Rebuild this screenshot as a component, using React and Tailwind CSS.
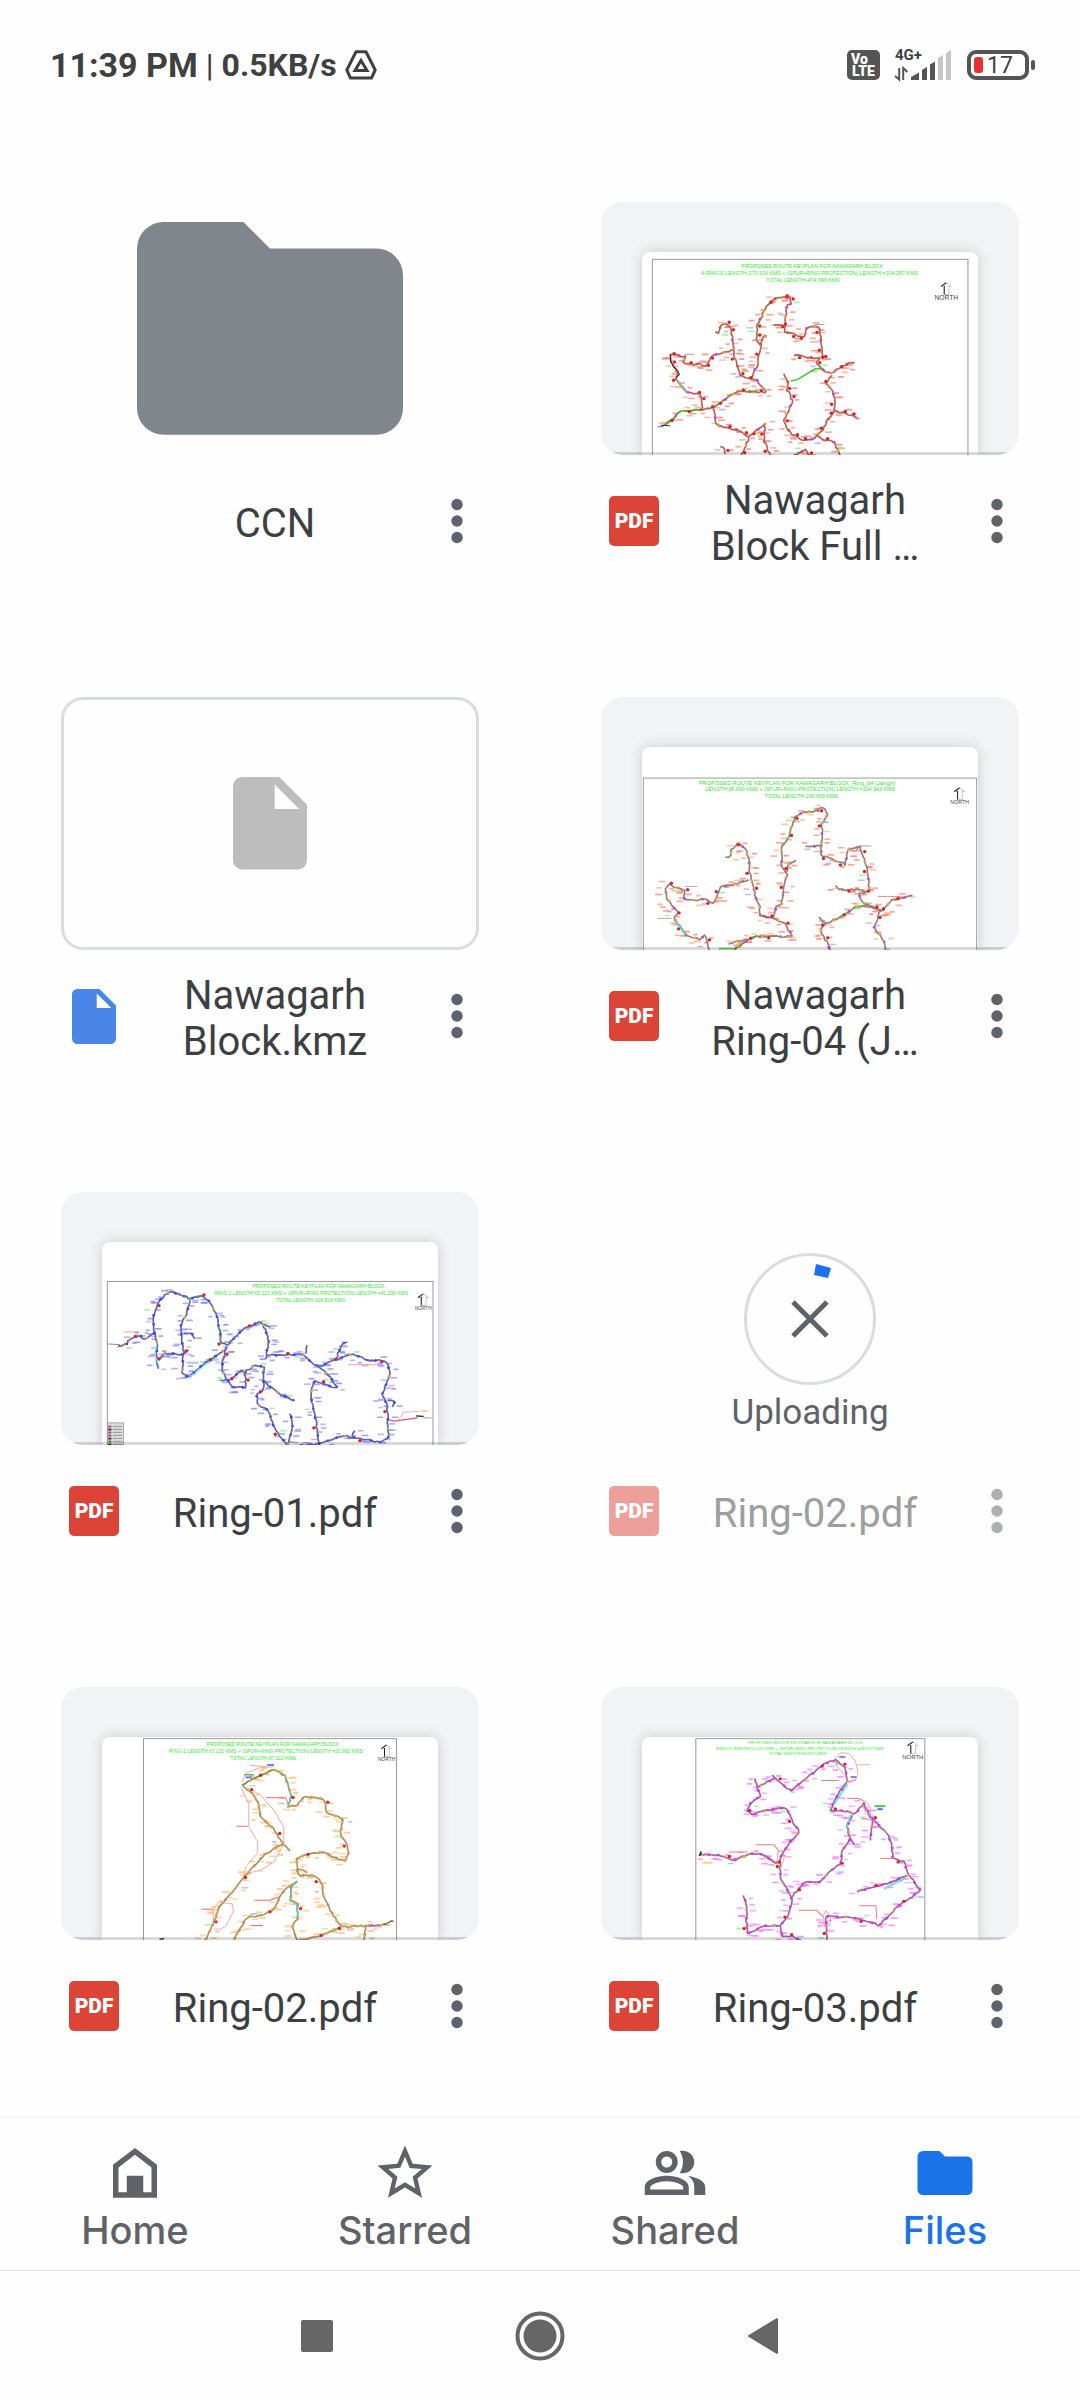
import React from "react";

const FOLDER = "M2 0H8L10 2H18A2 2 0 0 1 20 4V14A2 2 0 0 1 18 16H2A2 2 0 0 1 0 14V2A2 2 0 0 1 2 0Z";
const FILE = "M2 0H10L16 6V18A2 2 0 0 1 14 20H2A2 2 0 0 1 0 18V2A2 2 0 0 1 2 0ZM9 1.6V6.9H14.3Z";

const MAPS = {
  full: {
    box: "156 186 1005 609",
    frame: [187, 208, 944],
    titles: [
      [665, 235, 16, "PROPOSED ROUTE KEYPLAN FOR NAWAGARH BLOCK"],
      [657, 256, 16, "4-RING'S LENGTH-270.103 KMS + (SPUR+RING PROTECTION) LENGTH =204.287 KMS"],
      [637, 277, 16, "TOTAL LENGTH-474.390 KMS"],
    ],
    north: [1066, 277, 20],
    line: "#b8605a",
    marks: ["#e8482a", "#e02020", "#e02020", "#d63ad6", "#e8a33a", "#e02020"],
    labels: ["#ff6a5a", "#ff8a6a", "#ff5a5a", "#ff9a80", "#ff7a6a"],
    routes: [
      "375,425 385,428 390,410 405,397 418,408 425,440 428,470 430,490 440,520 450,555 470,565 500,570 527,605",
      "338,655 330,612 320,610 290,605 275,590 258,565 265,550 250,530 240,505 245,490 285,500 280,520 310,522 330,520 348,530 365,495 400,488 430,478",
      "215,708 245,690 270,662 338,657 370,652 400,630 440,603 527,605",
      "485,562 490,540 502,530 505,500 512,465 500,450 500,400 515,380 525,350 550,325 585,322 600,322 600,340 588,350 586,385 584,425 605,430 640,443 650,410 685,408 690,440 698,505",
      "512,460 516,444 530,437",
      "610,495 620,492 640,500 690,505 675,515 690,535 720,550 750,530 790,514",
      "580,550 595,580 588,595 608,632 590,665 580,690 600,730 640,750 670,745 695,720 710,690 730,665 732,620 725,600 705,580 725,555",
      "730,660 760,668 800,680",
      "680,735 700,748 730,755 750,795",
      "370,655 378,700 410,712 440,717 475,740 525,700 520,750 540,795",
      "475,740 465,770 453,795",
      "390,768 405,772 405,790",
      "610,792 645,778 658,795",
      "550,404 582,406",
    ],
    accents: [
      ["#22cc22", 4, "225,704 245,690 270,662 338,657"],
      ["#66aa33", 3, "372,648 400,630 440,603 500,602"],
      ["#22cc22", 4, "600,572 620,568 650,550 675,535 700,537"],
      ["#66bb44", 2, "500,450 500,400 515,380 525,350 550,325 585,322"],
      ["#55dddd", 3, "262,570 275,590 290,605"],
      ["#222222", 3, "240,492 242,515 252,530 262,540 268,552 258,562"],
      ["#333333", 3, "212,704 240,706"],
      ["#6666ff", 3, "202,709 218,709"],
      ["#777777", 2, "285,492 312,492"],
      ["#777777", 2, "672,403 702,403"],
    ],
  },
  ring4: {
    box: "156 201 1005 609",
    frame: [160, 294, 997],
    titles: [
      [620, 314, 17, "PROPOSED ROUTE KEYPLAN FOR NAWAGARH BLOCK_Ring_04 (Janjgir)"],
      [629, 333, 16, "LENGTH 95.690 KMS + (SPUR+RING PROTECTION) LENGTH =104.943 KMS"],
      [632, 354, 16, "TOTAL LENGTH 200.633 KMS"],
    ],
    north: [1106, 322, 16],
    line: "#947f7c",
    marks: ["#e8a33a", "#e02020", "#d63ad6", "#e8a33a", "#947f7c", "#e02020"],
    labels: ["#ff7a5a", "#ff8a6a", "#ff5a5a", "#ffaa80", "#ff7a6a"],
    routes: [
      "405,530 420,530 425,505 445,490 465,505 475,540 478,575 485,600 495,650 508,680 510,705 545,712 580,725 608,768 490,768 430,808",
      "357,808 345,765 330,775 290,768 270,735 248,712 265,695 250,680 228,650 228,625 235,612 285,630 280,655 320,660 345,655 370,670 390,620 430,612 475,598",
      "548,712 560,675 575,670 580,620 590,580 575,565 573,500 595,470 600,445 615,410 640,395 680,393 695,380 712,400 695,430 692,525 745,545 765,553 772,510 808,500 825,550 832,580 836,632",
      "590,575 590,555 617,540",
      "735,615 745,628 800,628 830,635 805,640 815,665 870,690 905,660 965,645",
      "685,710 705,730 745,712 795,680 825,675 870,690",
      "705,730 690,750 720,808",
      "870,690 850,740 880,780 882,808",
      "645,498 690,498",
      "415,790 440,782 470,778",
    ],
    accents: [
      ["#55bb55", 4, "745,712 795,680 825,675"],
      ["#66bb44", 2, "575,500 595,470 600,445 615,410 640,395 680,393"],
      ["#669955", 4, "430,806 490,768 560,766"],
      ["#66dddd", 4, "252,718 270,740 290,768"],
      ["#66dddd", 5, "690,430 700,424"],
      ["#cc3344", 3, "505,703 530,712 548,712"],
      ["#888888", 2, "285,618 323,618"],
      ["#888888", 2, "203,714 245,714"],
      ["#777777", 2, "808,497 842,497"],
      ["#dd5555", 2, "862,648 932,648"],
      ["#55dd55", 5, "386,804 428,804"],
    ],
  },
  ring1: {
    box: "186 186 1005 609",
    frame: [202, 304, 974],
    titles: [
      [834, 325, 15, "PROPOSED ROUTE KEYPLAN FOR NAWAGARH BLOCK"],
      [812, 345, 15, "RING-1 LENGTH 65.223 KMS + (SPUR+RING PROTECTION) LENGTH =41.295 KMS"],
      [810, 366, 15, "TOTAL LENGTH 106.518 KMS"],
    ],
    north: [1147, 340, 14],
    legend: [203, 727, 47],
    line: "#6262b4",
    marks: ["#4444dd", "#e02020", "#4444dd", "#e8a33a", "#4444dd", "#5a5ad8"],
    labels: ["#7a7aff", "#8a8aff", "#6a6aff", "#9a9aff", "#7a7aff"],
    routes: [
      "235,498 260,492 270,475 300,465 310,480 345,455",
      "355,565 348,540 352,490 342,455 340,400 355,365 388,333 430,348 450,355 485,348 510,365 530,410 540,460 540,485 560,495",
      "450,360 440,400 422,435 425,480 430,520 425,580 445,590 490,550 530,525 555,505",
      "355,540 370,520 400,520 425,522 445,510",
      "430,460 455,460 465,475",
      "560,495 585,470 610,445 655,425 670,435 685,480 675,535",
      "680,525 790,522 810,545 835,560 880,540 935,520 980,540 1035,540 1048,580 1025,640 1040,680 1042,770 1018,785 960,775 905,765 870,778 835,790 765,795",
      "560,500 545,545 550,580 575,620 615,622 615,575 640,556 670,558 668,630 648,645 655,675 685,690 700,740 740,795 757,740 750,700",
      "670,600 690,620 715,640 760,660",
      "835,560 870,590 890,622 850,612 822,600 810,640 825,720 835,790",
      "885,535 905,490 920,485",
      "795,520 800,495",
      "665,430 690,440",
      "540,600 565,600 600,572 615,572",
      "1040,660 1062,662 1055,680",
      "935,768 940,750",
    ],
    accents: [
      ["#77eeee", 3, "352,480 344,525 358,560"],
      ["#77dddd", 3, "445,592 490,555 530,530"],
      ["#44aa77", 2, "388,335 430,348 450,355 485,348 510,365 530,410 538,460 540,485"],
      ["#55bb77", 2, "545,530 543,575 570,600"],
      ["#cc7766", 3, "235,498 262,490 270,475 305,464"],
      ["#555555", 2, "203,491 240,493 232,502"],
      ["#ff7777", 2, "250,455 292,455 292,464"],
      ["#ff6666", 2, "922,553 1008,553"],
      ["#dd5577", 4, "1045,718 1060,722 1130,712"],
      ["#ff8877", 2, "1072,720 1088,695 1135,693"],
      ["#ffbb66", 4, "1140,692 1160,692"],
      ["#333333", 4, "1125,706 1148,708"],
      ["#777777", 2, "1148,712 1172,712"],
      ["#4488dd", 4, "832,562 850,556"],
    ],
  },
  ring2: {
    box: "186 201 1005 609",
    frame: [310, 206, 757],
    titles: [
      [697, 228, 15, "PROPOSED ROUTE KEYPLAN FOR NAWAGARH BLOCK"],
      [676, 249, 15, "RING-2 LENGTH 67.120 KMS + (SPUR+RING PROTECTION) LENGTH =20.992 KMS"],
      [668, 269, 15, "TOTAL LENGTH 87.112 KMS"],
    ],
    north: [1037, 224, 15],
    line: "#ad9163",
    marks: ["#e8a33a", "#e02020", "#e8a33a", "#e8a33a", "#ad9163", "#d8902a"],
    labels: ["#ffbb66", "#ffaa55", "#ffc880", "#ffb060", "#ffb890"],
    routes: [
      "605,345 640,325 700,298 735,320 752,375 742,410 770,405 790,380 850,385 860,430 905,445 900,495 918,520 925,545 915,572 880,560 850,545 810,548 768,565 770,600 775,615 820,615 845,640 850,680 870,720 900,770 980,765 1040,762",
      "605,345 640,375 655,400 660,440 690,465 728,520 748,542",
      "728,520 670,555 615,615 580,660 535,710 515,770 495,808",
      "770,632 735,655 718,680 700,715 670,735 625,738 600,770 580,808",
      "770,632 752,650 750,690 772,700 772,745 755,770 770,808 830,800 900,770",
      "975,765 970,808",
      "770,595 800,605",
    ],
    accents: [
      ["#44cccc", 3, "735,322 752,375 742,410"],
      ["#44cccc", 4, "768,632 752,650 750,690 768,700 772,740"],
      ["#77994a", 4, "605,345 640,325 700,298"],
      ["#f07b84", 2, "602,352 625,400 625,470 652,515 650,550 615,590 612,610 660,600 700,575 730,520 730,470 700,420 660,375 620,352"],
      ["#f07b84", 2, "520,770 518,715 535,695 575,700 580,722 555,768 540,776 520,775"],
      ["#f07b84", 2, "605,335 615,310 658,293 700,290"],
      ["#ff7777", 2, "630,286 680,290"],
      ["#ff6666", 3, "676,383 735,383 742,398"],
      ["#ff6666", 3, "588,468 622,468"],
      ["#ff6666", 3, "642,689 690,689 718,678"],
      ["#ff6666", 3, "483,716 515,716"],
      ["#ff6666", 3, "630,765 668,765"],
      ["#44cc44", 5, "612,314 640,314"],
      ["#6666ff", 5, "615,322 634,322"],
      ["#7777ff", 6, "680,285 700,285"],
      ["#dd44dd", 4, "985,767 1015,764"],
      ["#555555", 4, "1028,764 1040,758 1050,752 1058,752"],
      ["#555555", 5, "358,806 372,804"],
    ],
  },
  ring3: {
    box: "156 201 1005 609",
    frame: [317, 206, 685],
    titles: [
      [645, 221, 13, "PROPOSED ROUTE KEYPLAN FOR NAWAGARH BLOCK"],
      [628, 239, 13, "RING-3 LENGTH 52.070 KMS + (SPUR+RING PROTECTION) LENGTH =28.057 KMS"],
      [621, 256, 13, "TOTAL LENGTH 80.827 KMS"],
    ],
    north: [966, 215, 18],
    line: "#a55fae",
    marks: ["#d63ad6", "#e02020", "#d63ad6", "#e8a33a", "#c040c0", "#d63ad6"],
    labels: ["#ff6aff", "#ff5aff", "#ff7aff", "#f48aff", "#ff6af0"],
    routes: [
      "735,268 695,285 640,330 600,362 555,325 500,350 510,378 480,400 470,425 490,432 540,418 588,413 610,460 628,485 595,520 570,560 568,600 575,635 595,665 605,690 590,740 570,765 525,765 470,790 468,700 460,675",
      "735,268 765,295 770,335 745,370 725,405 718,420 760,422 795,430 820,400 840,440 890,490 905,530 905,560 940,575 950,610 990,660 930,700 865,765 810,745 770,740 705,738 710,770 708,808",
      "785,435 770,470 780,505 755,540 750,580 715,605 690,635 640,635 605,680",
      "845,440 840,510",
      "950,615 890,640 845,650 800,665",
      "330,552 390,555 430,570 480,550 510,550 560,580",
      "570,765 575,798 600,796 630,808",
      "555,325 545,315",
      "500,350 495,325",
      "780,505 790,525",
    ],
    accents: [
      ["#66dddd", 4, "770,342 730,402"],
      ["#66dddd", 4, "780,435 768,475"],
      ["#66dddd", 4, "945,622 880,655"],
      ["#aa8877", 3, "335,552 390,555 430,570 480,550 510,550 555,580"],
      ["#f07b74", 2, "735,265 750,248 775,250 795,275 802,310 795,328 775,334 762,315 740,290 735,265"],
      ["#f07b74", 2, "800,284 838,284"],
      ["#f07b74", 3, "692,331 744,331"],
      ["#f07b74", 2, "815,400 822,392 838,410 840,435 825,432 815,400"],
      ["#f07b74", 3, "770,385 803,385 820,392"],
      ["#f07b74", 3, "496,523 550,523 568,545"],
      ["#f07b74", 2, "562,545 575,540 582,560 572,590 560,575 562,545"],
      ["#f07b74", 3, "415,545 472,545"],
      ["#f07b74", 3, "625,719 678,719 697,738"],
      ["#f07b74", 2, "698,735 706,720 720,740 718,765 702,768 698,735"],
      ["#f07b74", 3, "806,706 856,706 858,745"],
      ["#f07b74", 3, "868,564 905,564"],
      ["#44cc44", 6, "852,408 884,408"],
      ["#5566ff", 6, "860,417 876,417"],
      ["#7788ff", 6, "746,261 764,261"],
      ["#7788ff", 6, "780,321 798,321"],
      ["#222222", 5, "328,557 333,544"],
      ["#ffcc66", 5, "336,577 366,577"],
    ],
  },
};

// Walks a route at a fixed step and returns the survey points on it.
function survey(route, step) {
  const pts = route.split(" ").map((p) => p.split(",").map(Number));
  const out = [];
  let carry = 0;
  for (let i = 1; i < pts.length; i++) {
    const [x0, y0] = pts[i - 1];
    const [x1, y1] = pts[i];
    const len = Math.hypot(x1 - x0, y1 - y0);
    let d = step - carry;
    while (d <= len) {
      out.push([x0 + ((x1 - x0) * d) / len, y0 + ((y1 - y0) * d) / len]);
      d += step;
    }
    carry = len - (d - step);
  }
  return out;
}

function noise(n) {
  const v = Math.sin(n * 127.1 + 11.7) * 43758.5453;
  return v - Math.floor(v);
}

function wobble(route, seed) {
  const first = route.split(" ")[0];
  const last = route.split(" ").slice(-1)[0];
  const mid = survey(route, 9).map(
    ([x, y], i) => (x + (noise(i + seed) - 0.5) * 5).toFixed(1) + "," + (y + (noise(i * 3 + seed) - 0.5) * 5).toFixed(1)
  );
  return [first, ...mid, last].join(" ");
}

function RouteMap({ map }) {
  const [fx, fy, fw] = map.frame;
  const [nx, ny, ns] = map.north;
  return (
    <svg viewBox={map.box} className="block w-full" role="img" aria-label={map.titles[0][3]}>
      <rect x={fx} y={fy} width={fw} height="700" fill="none" stroke="#9a9a9a" strokeWidth="3" />
      {map.titles.map(([x, y, size, text]) => (
        <text key={y} x={x} y={y} fontSize={size} fill="#2aee2a" textAnchor="middle" fontFamily="'Liberation Sans', Arial, sans-serif">
          {text}
        </text>
      ))}
      <path
        d={`M${nx - 6} ${ny + 36}V${ny + 12}H${nx - 15}L${nx} ${ny + 1}L${nx + 15} ${ny + 12}H${nx + 8}V${ny + 36}Z`}
        fill="none"
        stroke="#aaa"
        strokeWidth="2"
      />
      <path d={`M${nx - 6} ${ny + 36}V${ny + 10}M${nx - 16} ${ny + 12}L${nx} ${ny + 1}`} stroke="#222" strokeWidth="3" />
      <text x={nx} y={ny + 54 - (20 - ns)} fontSize={ns} fill="#444" textAnchor="middle" fontFamily="'Liberation Sans', Arial, sans-serif">
        NORTH
      </text>
      {map.legend && (
        <g>
          <rect x={map.legend[0]} y={map.legend[1]} width={map.legend[2]} height="90" fill="#dcdcdc" stroke="#888" strokeWidth="2" />
          {[0, 1, 2, 3, 4, 5, 6].map((i) => (
            <g key={i}>
              <rect x={map.legend[0] + 2} y={map.legend[1] + 8 + i * 9} width="9" height="6" fill={["#b55", "#333", "#b3b", "#c35", "#343", "#484", "#222"][i]} />
              <rect x={map.legend[0] + 15} y={map.legend[1] + 9 + i * 9} width="28" height="3" fill="#999" />
            </g>
          ))}
        </g>
      )}
      {map.routes.map((r, k) =>
        survey(r, 13).map(([x, y], i) => {
          const n = i + k * 53;
          const side = noise(n) > 0.5 ? 1 : -1;
          const w = 13 + noise(n * 5) * 9;
          const cx = x + side * (8 + noise(n * 7) * 16);
          const cy = y + (noise(n * 9) - 0.5) * 28;
          const fill = n % 13 === 0 ? "#7ae87a" : n % 17 === 0 ? "#9a9aff" : map.labels[n % 5];
          return <rect key={k + "-" + i} x={cx - w / 2} y={cy} width={w} height="5" rx="2" fill={fill} opacity="0.65" />;
        })
      )}
      {map.accents.filter((a) => a[1] >= 3 && a[0].endsWith("dddd")).map(([c, w, p]) => (
        <polyline key={p} points={p} fill="none" stroke={c} strokeWidth={w + 5} opacity="0.5" />
      ))}
      {map.routes.map((r, k) => (
        <polyline key={k} points={wobble(r, k * 31)} fill="none" stroke={map.line} strokeWidth="5" strokeLinejoin="round" />
      ))}
      {map.accents.map(([c, w, p]) => (
        <polyline key={p} points={p} fill="none" stroke={c} strokeWidth={w} strokeLinejoin="round" />
      ))}
      {map.routes.map((r, k) =>
        survey(r, 27).map(([x, y], i) => {
          const n = i + k;
          const fill = map.marks[n % 6];
          const off = fill === "#e02020" ? (noise(n) > 0.5 ? 8 : -8) : 0;
          return <circle key={k + "-" + i} cx={x + off} cy={y - off / 2} r={off ? 5 : 4} fill={fill} />;
        })
      )}
    </svg>
  );
}

function FolderIcon({ className }) {
  return (
    <svg viewBox="0 0 20 16" className={className} fill="currentColor" aria-hidden="true">
      <path d={FOLDER} />
    </svg>
  );
}

function FileIcon({ className }) {
  return (
    <svg viewBox="0 0 16 20" className={className} fill="currentColor" fillRule="evenodd" aria-hidden="true">
      <path d={FILE} />
    </svg>
  );
}

function PdfBadge() {
  return (
    <span className="flex size-[50px] items-center justify-center rounded-[5px] bg-[#db4437] text-[21px] leading-none font-black text-white">
      PDF
    </span>
  );
}

function Preview({ item }) {
  if (item.kind === "folder") {
    return (
      <div className="flex h-[253px] items-center justify-center">
        <FolderIcon className="w-[266px] text-[#80868b]" />
      </div>
    );
  }
  if (item.kind === "file") {
    return (
      <div className="flex h-[253px] items-center justify-center rounded-[22px] border-3 border-[#dadce0]">
        <FileIcon className="w-[74px] text-[#bdbdbd]" />
      </div>
    );
  }
  if (item.uploading) {
    return (
      <div className="flex h-[253px] flex-col items-center justify-end gap-2 pb-3">
        <button type="button" aria-label="Cancel upload" className="size-[132px] rounded-full border-3 border-[#dadce0]">
          <svg viewBox="0 0 126 126" className="block w-full" aria-hidden="true">
            <path d="M69 8L84 12L81 22L67 19Z" fill="#1a73e8" />
            <path d="M46 46L80 80M80 46L46 80" stroke="#5f6368" strokeWidth="5" />
          </svg>
        </button>
        <p className="text-[35px] leading-10 text-[#5f6368]">Uploading</p>
      </div>
    );
  }
  return (
    <div className="relative h-[253px] overflow-hidden rounded-[22px] bg-[#f1f3f4] px-[41px] pt-[50px]">
      <div className="overflow-hidden rounded-t-lg bg-white shadow-[0_0_14px_rgba(0,0,0,0.16)]">
        <RouteMap map={MAPS[item.map]} />
      </div>
      <div className="absolute inset-x-0 bottom-0 h-[3px] bg-black/15" />
    </div>
  );
}

const ITEMS = [
  { name: "CCN", kind: "folder" },
  { name: "Nawagarh Block Full …", kind: "pdf", map: "full" },
  { name: "Nawagarh Block.kmz", kind: "file" },
  { name: "Nawagarh Ring-04 (J…", kind: "pdf", map: "ring4" },
  { name: "Ring-01.pdf", kind: "pdf", map: "ring1" },
  { name: "Ring-02.pdf", kind: "pdf", uploading: true },
  { name: "Ring-02.pdf", kind: "pdf", map: "ring2" },
  { name: "Ring-03.pdf", kind: "pdf", map: "ring3" },
];

function Item({ item }) {
  return (
    <li className="px-[61px]">
      <Preview item={item} />
      <div className={item.uploading ? "flex h-[132px] items-center pl-2 opacity-50" : "flex h-[132px] items-center pl-2"}>
        <div className="flex w-[50px] shrink-0">
          {item.kind === "pdf" && <PdfBadge />}
          {item.kind === "file" && <FileIcon className="ml-[3px] w-11 text-[#4a86e8]" />}
        </div>
        <h2 className="flex-1 pt-1.5 pr-10 pl-9 text-center text-[40px] leading-[46px] text-[#3c4043]">{item.name}</h2>
        <button type="button" aria-label={"More actions for " + item.name} className="flex w-11 justify-center text-[#5f6368]">
          <svg width="12" height="46" viewBox="0 0 12 46" fill="currentColor" aria-hidden="true">
            <circle cx="6" cy="6.5" r="5.7" />
            <circle cx="6" cy="23" r="5.7" />
            <circle cx="6" cy="39.5" r="5.7" />
          </svg>
        </button>
      </div>
    </li>
  );
}

function StatusBar() {
  return (
    <header className="flex h-[130px] items-center justify-between pr-[45px] pl-[50px] text-[#404040]">
      <div className="flex items-center">
        <span className="text-[34px] leading-10 font-bold">11:39 PM</span>
        <span className="mx-2 text-[32px] leading-10">|</span>
        <span className="text-[32px] leading-10 font-bold">0.5KB/s</span>
        <svg width="32" height="30" viewBox="0 0 32 30" className="ml-2" fill="none" stroke="currentColor" strokeWidth="3" strokeLinejoin="round" aria-hidden="true">
          <path d="M11 1.8H21L30.2 20L26.5 28H5.5L1.8 20Z" />
          <path d="M16 10.5L22 20.5H10Z" strokeLinejoin="miter" />
        </svg>
      </div>
      <div className="flex items-center">
        <div className="flex h-[30px] w-[33px] flex-col items-center justify-center rounded-[5px] bg-[#555] text-[14px] leading-3 font-black text-white">
          <span className="mr-2">Vo</span>
          <span>LTE</span>
        </div>
        <div className="ml-[15px] w-[57px]">
          <svg width="57" height="32" viewBox="0 0 57 32" className="block overflow-visible" aria-label="Mobile signal, 4G+">
            <text x="0" y="11" fontSize="15" fontWeight="700" fill="#404040" fontFamily="Roboto, sans-serif">
              4G+
            </text>
            <path d="M4.2 19V30.5L0 27M8.2 31V19L12.4 23" fill="none" stroke="#555" strokeWidth="2" />
            <path d="M16 28L24 23.5V31H16Z" fill="#555" />
            <path d="M27 21L32 18V31H27Z" fill="#555" />
            <path d="M35 15.5L40 12.5V31H35Z" fill="#555" />
            <path d="M43 9L48 6V31H43Z" fill="#c6c6c6" />
            <path d="M51 4L56 1V31H51Z" fill="#c6c6c6" />
          </svg>
        </div>
        <div className="ml-[15px] flex h-[30px] w-[62px] items-center gap-1 rounded-[9px] border-4 border-[#555] pl-[3px]">
          <span className="h-4 w-[9px] rounded-[3px] bg-[#e83030]" />
          <span className="text-[23px] leading-none">17</span>
        </div>
        <span className="ml-0.5 h-2.5 w-1 rounded-full bg-[#555]" />
      </div>
    </header>
  );
}

const TABS = [
  {
    label: "Home",
    icon: <path fillRule="evenodd" d="M12 2.9L20 9V21H4V9ZM12 5.4L6 10V19H9V13H15V19H18V10Z" />,
  },
  {
    label: "Starred",
    icon: (
      <path d="M22 9.24l-7.19-.62L12 2 9.19 8.63 2 9.24l5.46 4.73L5.82 21 12 17.27 18.18 21l-1.63-7.03L22 9.24zM12 15.4l-3.76 2.27 1-4.28-3.32-2.88 4.38-.38L12 6.1l1.71 4.04 4.38.38-3.32 2.88 1 4.28L12 15.4z" />
    ),
  },
  {
    label: "Shared",
    icon: (
      <path
        fillRule="evenodd"
        d="M9 4A4 4 0 1 1 9 12A4 4 0 1 1 9 4ZM9 6A2 2 0 1 0 9 10A2 2 0 1 0 9 6ZM1 20V17.2C1 14.4 5.5 13 9 13S17 14.4 17 17.2V20ZM3 18H15V17.2C15 16.2 12 15 9 15S3 16.2 3 17.2ZM13.7 12C15.3 9.7 15.3 6.3 13.7 4C16.7 3.4 19 5.4 19 8S16.7 12.6 13.7 12ZM19 20V17C19 15.4 18.3 14.1 16.8 13.1C20 13.6 23 14.9 23 17.2V20Z"
      />
    ),
  },
  { label: "Files", icon: <path d={FOLDER} transform="translate(2 4)" />, active: true },
];

function BottomNav() {
  return (
    <nav className="border-t-2 border-b border-t-[#f8f8f8] border-b-[#e0e0e0] pt-[22px] pb-[18px]">
      <ul className="grid grid-cols-4">
        {TABS.map((t) => (
          <li key={t.label}>
            <a
              href={"#" + t.label.toLowerCase()}
              aria-current={t.active ? "page" : undefined}
              className={t.active ? "flex flex-col items-center gap-0.5 text-[#1a73e8]" : "flex flex-col items-center gap-0.5 text-[#5f6368]"}
            >
              <svg width="66" height="66" viewBox="0 0 24 24" fill="currentColor" aria-hidden="true">
                {t.icon}
              </svg>
              <span className="font-[Inter,sans-serif] text-[38px] leading-11 font-medium">{t.label}</span>
            </a>
          </li>
        ))}
      </ul>
    </nav>
  );
}

function SystemNav() {
  return (
    <div className="flex h-[129px] items-center justify-center gap-[151px] text-[#666]">
      <button type="button" aria-label="Recent apps" className="flex w-[72px] justify-center">
        <span className="size-8 rounded-[2px] bg-current" />
      </button>
      <button type="button" aria-label="Home screen" className="flex w-[72px] justify-center">
        <svg width="50" height="50" viewBox="0 0 50 50" aria-hidden="true">
          <circle cx="25" cy="25" r="22.5" fill="none" stroke="currentColor" strokeWidth="4" />
          <circle cx="25" cy="25" r="16.5" fill="currentColor" />
        </svg>
      </button>
      <button type="button" aria-label="Back" className="flex w-[72px] justify-center">
        <svg width="32" height="38" viewBox="0 0 32 38" fill="currentColor" stroke="currentColor" strokeWidth="2" strokeLinejoin="round" aria-hidden="true">
          <path d="M2 19L30 2V36Z" />
        </svg>
      </button>
    </div>
  );
}

export default function App() {
  return (
    <div className="flex min-h-screen flex-col bg-[#fefefe] font-[Roboto,sans-serif]">
      <StatusBar />
      <main className="flex-1 pt-[72px]">
        <ul className="grid grid-cols-2 gap-y-[110px]">
          {ITEMS.map((item, i) => (
            <Item key={i} item={item} />
          ))}
        </ul>
      </main>
      <BottomNav />
      <SystemNav />
    </div>
  );
}
